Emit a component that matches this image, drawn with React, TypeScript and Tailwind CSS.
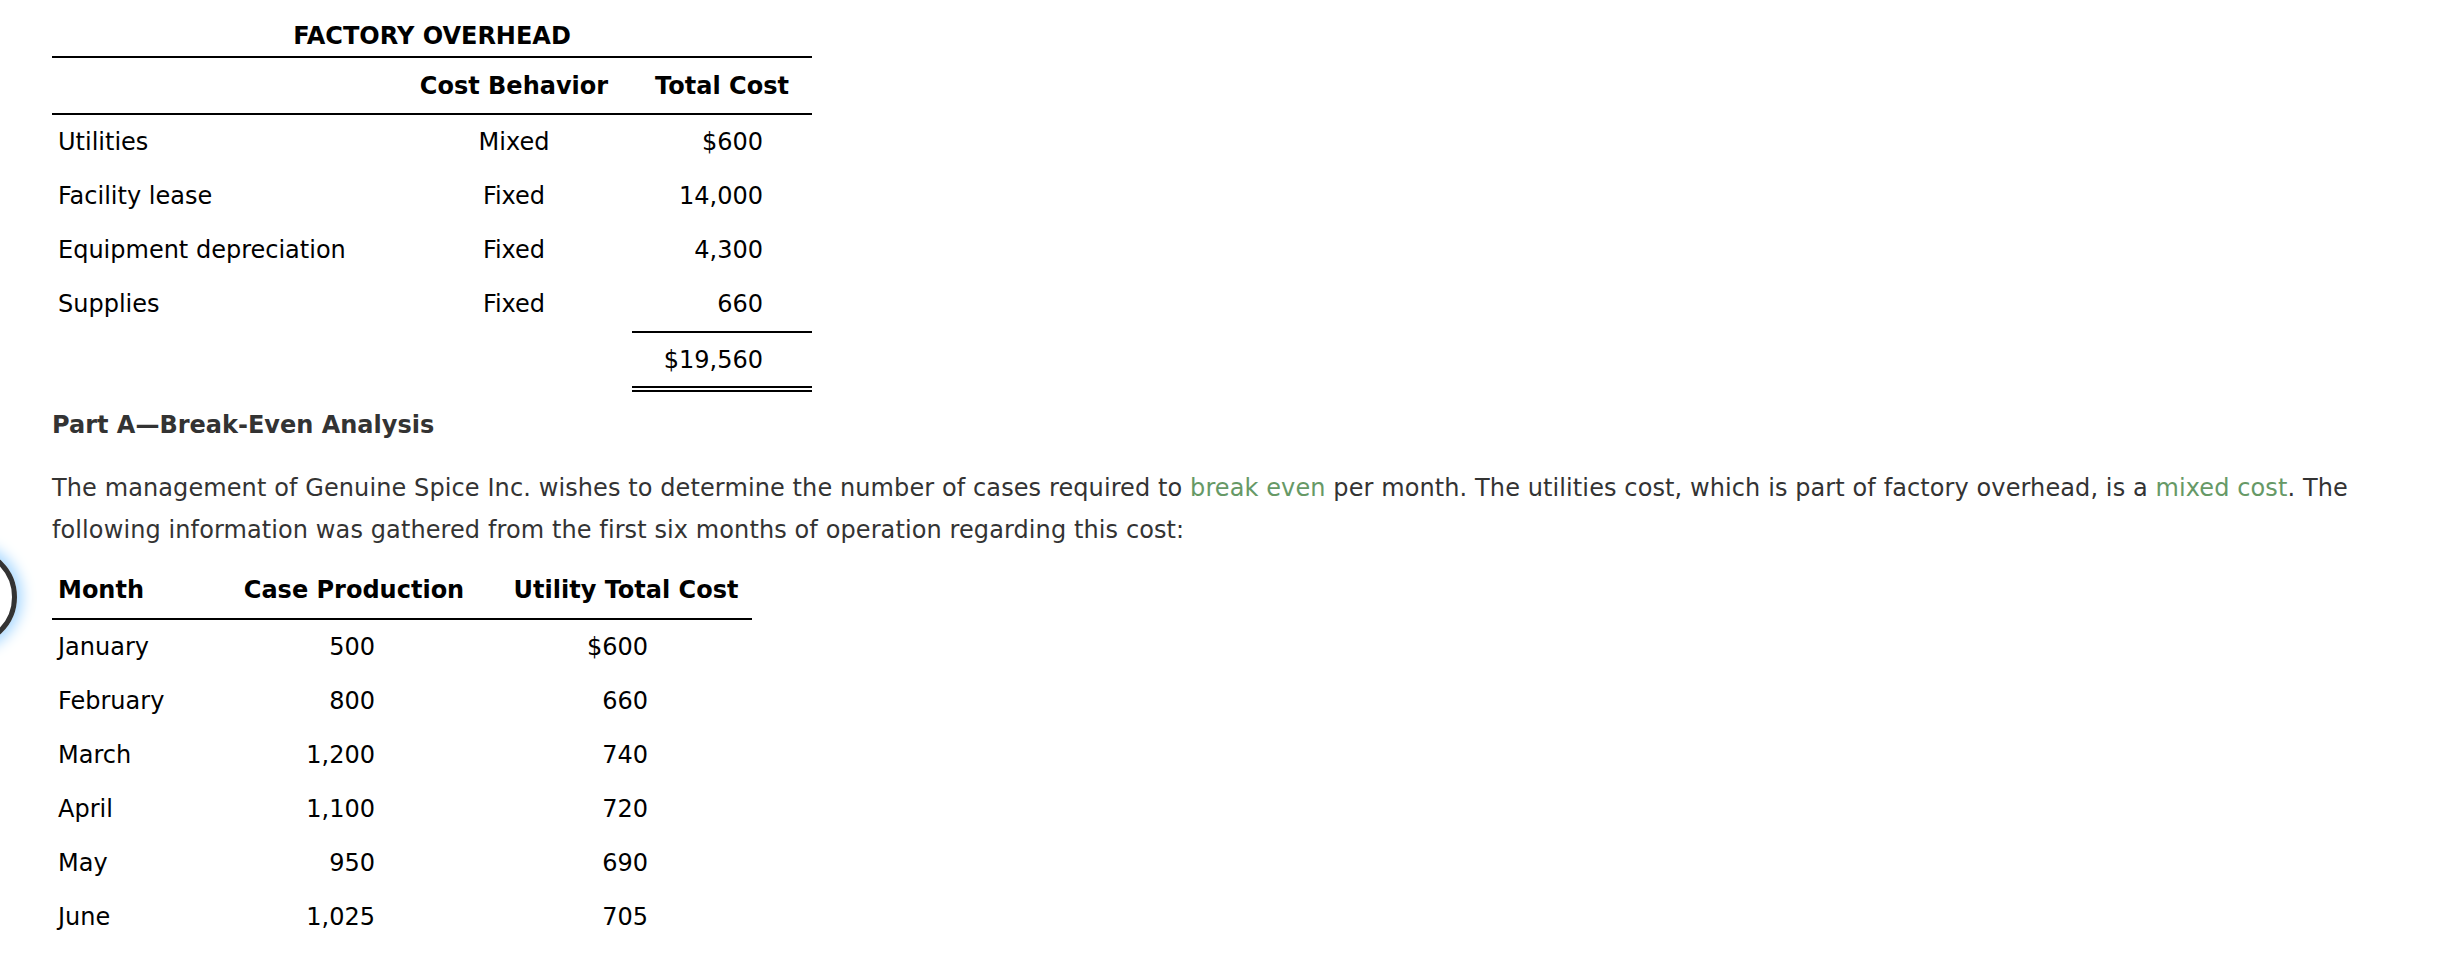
import React from "react";

const overhead = [
  { label: "Utilities", behavior: "Mixed", cost: "$600" },
  { label: "Facility lease", behavior: "Fixed", cost: "14,000" },
  { label: "Equipment depreciation", behavior: "Fixed", cost: "4,300" },
  { label: "Supplies", behavior: "Fixed", cost: "660" },
];

const months = [
  { month: "January", cases: "500", cost: "$600" },
  { month: "February", cases: "800", cost: "660" },
  { month: "March", cases: "1,200", cost: "740" },
  { month: "April", cases: "1,100", cost: "720" },
  { month: "May", cases: "950", cost: "690" },
  { month: "June", cases: "1,025", cost: "705" },
];

export default function App() {
  return (
    <main className="relative min-h-[972px] bg-white px-[52px] pt-[16px] text-[24px] text-black font-['DejaVu_Sans',Verdana,sans-serif] overflow-hidden">

      {/* ===== floating circle, cut off on the left ===== */}
      <div className="absolute left-[-83px] top-[547px] h-[100px] w-[100px] rounded-full border-[5px] border-[#333] shadow-[0_0_14px_5px_#a8d8ff]" />

      {/* ================= FACTORY OVERHEAD ================= */}
      <section className="w-[760px]">
        <h2 className="text-center font-bold leading-[40px]">FACTORY OVERHEAD</h2>

        <div className="grid grid-cols-[344px_236px_180px] border-y-2 border-black font-bold h-[59px] items-center">
          <div />
          <div className="text-center">Cost Behavior</div>
          <div className="text-center">Total Cost</div>
        </div>

        <div>
          {overhead.map((r) => (
            <div key={r.label} className="grid grid-cols-[344px_236px_180px] h-[54px] items-center">
              <div className="pl-[6px]">{r.label}</div>
              <div className="text-center">{r.behavior}</div>
              <div className="text-right pr-[49px]">{r.cost}</div>
            </div>
          ))}

          <div className="grid grid-cols-[344px_236px_180px]">
            <div />
            <div />
            <div className="h-[61px] flex items-center justify-end pr-[49px] border-t-2 border-b-[6px] border-double border-t-black border-b-black" style={{ borderTopStyle: "solid" }}>
              $19,560
            </div>
          </div>
        </div>
      </section>

      {/* ================= PART A ================= */}
      <h3 className="mt-[13px] font-bold leading-[40px] text-[#333]">Part A—Break-Even Analysis</h3>

      <p className="mt-[22px] leading-[42px] tracking-[0.1px] text-[#333]">
        The management of Genuine Spice Inc. wishes to determine the number of cases required to{" "}
        <span className="text-[#669966]">break even</span> per month. The utilities cost, which is part of factory
        overhead, is a <span className="text-[#669966]">mixed cost</span>. The following information was gathered from
        the first six months of operation regarding this cost:
      </p>

      {/* ================= MONTHLY TABLE ================= */}
      <section className="mt-[11px] w-[700px]">
        <div className="grid grid-cols-[156px_292px_252px] h-[58px] items-center border-b-2 border-black font-bold">
          <div className="pl-[6px]">Month</div>
          <div className="text-center">Case Production</div>
          <div className="text-center">Utility Total Cost</div>
        </div>

        {months.map((m) => (
          <div key={m.month} className="grid grid-cols-[156px_292px_252px] h-[54px] items-center">
            <div className="pl-[6px]">{m.month}</div>
            <div className="text-right pr-[125px]">{m.cases}</div>
            <div className="text-right pr-[104px]">{m.cost}</div>
          </div>
        ))}
      </section>

    </main>
  );
}
